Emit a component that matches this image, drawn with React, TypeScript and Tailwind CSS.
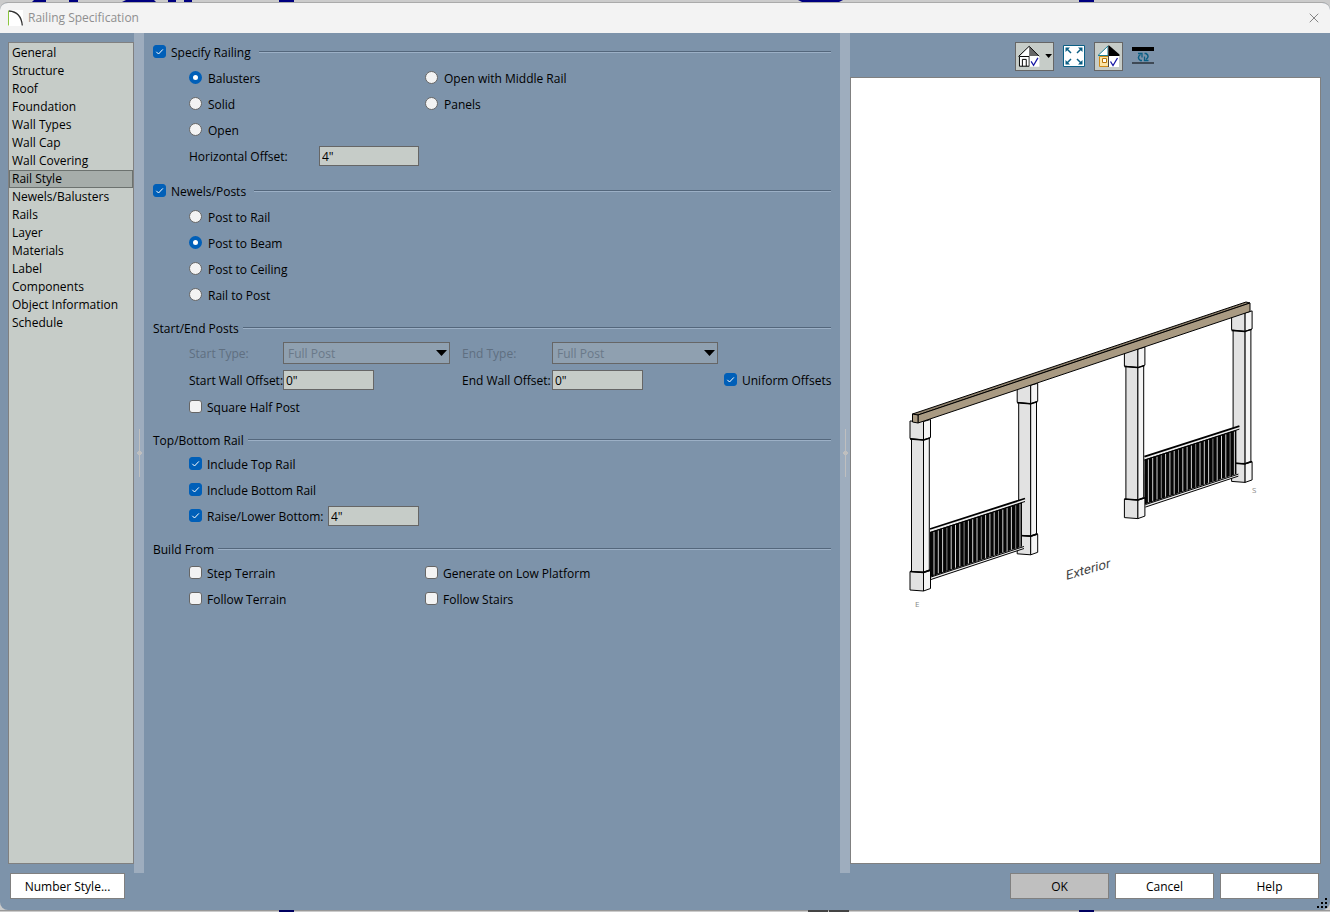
import { useState, type ReactNode } from "react";
import { X } from "lucide-react";

const pages = [
  "General",
  "Structure",
  "Roof",
  "Foundation",
  "Wall Types",
  "Wall Cap",
  "Wall Covering",
  "Rail Style",
  "Newels/Balusters",
  "Rails",
  "Layer",
  "Materials",
  "Label",
  "Components",
  "Object Information",
  "Schedule",
];

const FIELD = "h-5 border border-[#666] bg-[#c6ccc8] px-[2px] pt-px leading-4 outline-none";
const BUTTON = "h-[26px] border border-[#808080] pt-[2px] leading-[22px]";

function Check({ label, on = false }: { label: string; on?: boolean }) {
  const [checked, setChecked] = useState(on);
  return (
    <label className="flex h-[26px] items-center gap-[5px] whitespace-nowrap">
      <span className="relative mb-px block h-[13px] w-[13px] shrink-0">
        <input
          type="checkbox"
          checked={checked}
          onChange={() => setChecked((c) => !c)}
          className="block h-[13px] w-[13px] appearance-none rounded-[3px] border border-[#666] bg-[#f3f3f3] checked:border-[#005fb8] checked:bg-[#005fb8]"
        />
        {checked && (
          <svg viewBox="0 0 13 13" className="pointer-events-none absolute inset-0" fill="none" stroke="#fff">
            <path d="M3.3 6.8 5.5 9 9.9 4.4" />
          </svg>
        )}
      </span>
      <span className="pt-[2px]">{label}</span>
    </label>
  );
}

function Radio({ name, label, on = false }: { name: string; label: string; on?: boolean }) {
  return (
    <label className="flex h-[26px] items-center gap-[6px] whitespace-nowrap">
      <input
        type="radio"
        name={name}
        defaultChecked={on}
        className="mb-px h-[13px] w-[13px] shrink-0 appearance-none rounded-full border border-[#666] bg-[#f3f3f3] checked:border-4 checked:border-[#005fb8] checked:bg-white"
      />
      <span className="pt-[2px]">{label}</span>
    </label>
  );
}

function Rule() {
  return <div className="h-[2px] flex-1 border-t border-[#54677c] bg-[#9cb0c6]" />;
}

function CheckSection({ title, children }: { title: string; children: ReactNode }) {
  return (
    <section>
      <div className="flex items-center gap-2">
        <Check label={title} on />
        <Rule />
      </div>
      <div className="pl-9">{children}</div>
    </section>
  );
}

function Section({ title, children }: { title: string; children: ReactNode }) {
  return (
    <section>
      <div className="flex h-[22px] items-center gap-1">
        <h2 className="pt-[2px]">{title}</h2>
        <Rule />
      </div>
      <div className="pl-9">{children}</div>
    </section>
  );
}

function PostSelect({ id }: { id: string }) {
  return (
    <div className="relative h-[22px]">
      <select
        id={id}
        disabled
        className="h-full w-full appearance-none border border-[#666] bg-[#8fa0b0] px-1 pt-[2px] text-[#6a7989] opacity-100"
      >
        <option>Full Post</option>
      </select>
      <svg viewBox="0 0 11 6" className="pointer-events-none absolute right-[3px] top-2 h-[6px] w-[11px]">
        <path d="M0 0h11L5.5 6z" />
      </svg>
    </div>
  );
}

function Splitter() {
  return (
    <div className="flex w-[10px] shrink-0 items-center justify-center bg-[#9eadbe]">
      <svg viewBox="0 0 5 48" className="h-12 w-[5px]" fill="#bfbfbf">
        <path d="M2 0h1v48H2zM1 22h3v1h1v2H4v1H1v-1H0v-2h1z" />
      </svg>
    </div>
  );
}

function Post({ i }: { i: number }) {
  return (
    <g transform={`translate(${i * 107.2} ${i * -36.2})`} stroke="#000" strokeLinejoin="round">
      <path d="M911.5 438v134h12V438z" fill="#e2e2e2" />
      <path d="M923.5 438v134l5.8-2V438z" fill="#f4f4f4" />
      <path d="M910 421v17.500l13.500 1.500v-18.500z" fill="#e2e2e2" />
      <path d="M923.500 421.500v18.500l7-2.500v-18z" fill="#f4f4f4" />
      <path d="M910 571.500v18.500l13.500 1v-18.500z" fill="#e2e2e2" />
      <path d="M923.500 572.500v18.500l7-2.500v-18z" fill="#f4f4f4" />
      <path d="M910 439l13.500 1 6.500-2M910 571.500l13.500 1 7-2.500" fill="none" strokeWidth="1.500" />
    </g>
  );
}

function Panel({ i }: { i: number }) {
  const bars = Array.from({ length: 21 }, (_, n) => 934 + n * 4.3);
  return (
    <g transform={`translate(${i * 107.2} ${i * -36.2})`}>
      <path d="M930 531 1022 501.500v45L930 577z" fill="#050505" />
      {bars.map((x, n) => (
        <path
          key={x}
          d={`M${x} ${533 - (x - 930) * 0.323}v43`}
          stroke={n % 4 === 3 ? "#888" : "#d0d0d0"}
          strokeWidth="1"
        />
      ))}
      <path d="M930 529 1025 498.500v3L930 532z" fill="#eee" />
      <path d="M931 577 1024 546.500v2L931 579.500z" fill="#eee" />
      <path d="M930 529 1025 498.500" stroke="#000" strokeWidth="1.800" />
      <path d="M930 532.500 1025 501.500M931 577 1024 546.500M931 579.500 1024 548.500" stroke="#000" />
    </g>
  );
}

function RailingView() {
  return (
    <svg viewBox="851 78 469 785" className="h-full w-full" role="img" aria-label="Railing preview">
      <Post i={1} />
      <Post i={3} />
      <Panel i={0} />
      <Panel i={2} />
      <Post i={0} />
      <Post i={2} />
      <g stroke="#000" strokeLinejoin="round">
        <path d="M912.500 414 1246 302l4 1-332 112z" fill="#8f816c" />
        <path d="M918 415 1250 303v8.500L918 423z" fill="#a99a82" />
        <path d="M912.500 414l5.500 1v8l-5.500-1z" fill="#a99a82" />
      </g>
      <text
        transform="translate(1066 580) skewY(-16)"
        className="font-[Roboto,sans-serif] text-[13px]"
        fill="#444"
      >
        Exterior
      </text>
      <text x="915" y="607" className="text-[8px]" fill="#888">E</text>
      <text x="1252" y="493" className="text-[8px]" fill="#888">S</text>
    </svg>
  );
}

function Toolbar() {
  return (
    <div className="flex h-11 items-center justify-center gap-[9px] pr-[3px] pt-[2px]">
      <button aria-label="Camera view" className="flex h-[29px] w-[39px] items-center border border-[#666] bg-[#c6ccc8] pl-[2px]">
        <svg viewBox="0 0 36 24" className="h-6 w-9" fill="none">
          <path d="M1.500 12.500 11.500 2v10.500z" fill="#fff" />
          <path d="M11.500 2 22 12.500H11.500z" fill="#666" />
          <path d="M.5 12.500 11.500 2 22 12.500" stroke="#000" />
          <path d="M1.500 12.500h10v10h-10z" fill="#fff" stroke="#000" />
          <path d="M4.500 22.500v-7h4v7" stroke="#000" />
          <path d="M12 12h10v11H12z" fill="#fff" />
          <path d="m13.500 17.500 2.500 4 4.500-7.500" stroke="#1a1aa6" strokeWidth="1.300" />
          <path d="M28 10h7l-3.500 4z" fill="#000" />
        </svg>
      </button>
      <button aria-label="Fill window">
        <svg viewBox="0 0 22 22" className="h-[22px] w-[22px]" stroke="#0b5f85" fill="#0b5f85">
          <path d="M.5.5h21v21H.5z" fill="#fff" />
          <path d="M2.500 2.500h4.500l-4.500 4.500zM19.500 2.500H15l4.500 4.500zM2.500 19.500H7l-4.500-4.500zM19.500 19.500H15l4.500-4.500z" stroke="none" />
          <path d="m4 4 4 4M18 4l-4 4M4 18l4-4M18 18l-4-4" strokeWidth="1.500" />
        </svg>
      </button>
      <button aria-label="Show color" className="flex h-[29px] w-[29px] items-center justify-center border border-[#666] bg-[#c6ccc8]">
        <svg viewBox="0 0 24 24" className="h-6 w-6" fill="none">
          <path d="M2 11.500 12 2v9.500z" fill="#fff" stroke="#1c7f96" />
          <path d="M12.500 1v11H23.500v-1.500z" fill="#000" />
          <path d="M3.500 12.500H13v10H3.500z" fill="#fbe3a4" stroke="#cf8a17" />
          <path d="M6.500 14.500h4v4h-4z" fill="#fff" stroke="#b87408" />
          <path d="M12.500 2v21" stroke="#444" />
          <path d="M13 12h10v11H13z" fill="#fff" />
          <path d="m14.500 17.500 2.500 4 4.500-7.500" stroke="#1a1aa6" strokeWidth="1.300" />
        </svg>
      </button>
      <button aria-label="Refresh">
        <svg viewBox="0 0 22 22" className="h-[22px] w-[22px]" fill="none">
          <path d="M0 2h22v4H0zM0 17.500h22v1H0z" fill="#000" />
          <path d="M10 15.500H8.500C6 14 5.500 11.500 8.500 9.500" stroke="#0b5f85" strokeWidth="1.500" />
          <path d="M6 8.500h4v4" stroke="#0b5f85" strokeWidth="1.300" />
          <path d="M12.500 8.500H14c2.500 1.500 3 4 0 6" stroke="#0b5f85" strokeWidth="1.500" />
          <path d="M16.500 15.500h-4v-4" stroke="#0b5f85" strokeWidth="1.300" />
        </svg>
      </button>
    </div>
  );
}

function Backdrop({ children }: { children: ReactNode }) {
  return (
    <svg className="h-[2px] w-full" aria-hidden="true">
      {children}
    </svg>
  );
}

export default function App() {
  const [page, setPage] = useState("Rail Style");

  return (
    <div className="flex min-h-screen flex-col bg-[#cbcbcb] font-['Open_Sans','Noto_Sans',sans-serif] text-[12px] leading-[18px] text-black">
      <Backdrop>
        <path d="M34 0h12v2H32zM69 0h9v2h-9zM126 0h28l2 2h-34zM168 0h8v2h-8zM184 0h8v2h-8zM279 0h15v2h-15zM798 0h45l-4 2h-37zM1079 0h15v2h-15z" fill="#000080" />
      </Backdrop>
      <div className="flex flex-1 flex-col overflow-hidden rounded-lg border-t border-[#aaa] bg-[#7d93aa]">
        <header className="flex h-[30px] items-center bg-[#f3f3f3] pl-2 pr-2">
          <svg viewBox="0 0 15 16" className="h-4 w-[15px]" fill="none">
            <path d="M0 0h15v16H0z" fill="#fff" />
            <path d="M.5.500v15" stroke="#8cc63f" />
            <path d="M1 1c8 .5 12.500 6 13.300 14.500" stroke="#333" strokeWidth="1.300" />
          </svg>
          <h1 className="flex-1 pl-[5px] text-[#8f8f8f]">Railing Specification</h1>
          <button aria-label="Close">
            <X size={16} strokeWidth={1.5} color="#858585" />
          </button>
        </header>

        <div className="flex flex-1">
          <nav className="my-[9px] ml-2 w-[126px] shrink-0 border border-[#808080] bg-[#c6ccc8] pt-px">
            {pages.map((p) => (
              <button
                key={p}
                onClick={() => setPage(p)}
                className={
                  p === page
                    ? "block h-[18px] w-full whitespace-nowrap border border-[#6c726f] bg-[#a6adaa] px-[2px] text-left leading-4"
                    : "block h-[18px] w-full whitespace-nowrap px-[3px] text-left"
                }
              >
                {p}
              </button>
            ))}
          </nav>
          <Splitter />

          <main className="flex flex-1 flex-col gap-[9px] px-[9px] pt-[6px]">
            <CheckSection title="Specify Railing">
              <div className="grid grid-cols-[236px_1fr]">
                <Radio name="railing" label="Balusters" on />
                <Radio name="railing" label="Open with Middle Rail" />
                <Radio name="railing" label="Solid" />
                <Radio name="railing" label="Panels" />
                <Radio name="railing" label="Open" />
              </div>
              <div className="flex h-[26px] items-center">
                <label htmlFor="h-offset" className="w-[130px] pt-[2px]">Horizontal Offset:</label>
                <input id="h-offset" defaultValue={'4"'} className={`${FIELD} w-[100px]`} />
              </div>
            </CheckSection>

            <CheckSection title="Newels/Posts">
              <Radio name="newels" label="Post to Rail" />
              <Radio name="newels" label="Post to Beam" on />
              <Radio name="newels" label="Post to Ceiling" />
              <Radio name="newels" label="Rail to Post" />
            </CheckSection>

            <Section title="Start/End Posts">
              <div className="grid auto-rows-[26px] grid-cols-[94px_167px_90px_166px_1fr] items-center gap-y-px whitespace-nowrap pt-px">
                <label htmlFor="start-type" className="pt-[2px] text-[#5f6f81]">Start Type:</label>
                <PostSelect id="start-type" />
                <label htmlFor="end-type" className="pl-3 pt-[2px] text-[#5f6f81]">End Type:</label>
                <div className="-mr-3 ml-3">
                  <PostSelect id="end-type" />
                </div>
                <span />
                <label htmlFor="start-offset" className="pt-[2px]">Start Wall Offset:</label>
                <input id="start-offset" defaultValue={'0"'} className={`${FIELD} w-[91px]`} />
                <label htmlFor="end-offset" className="pl-3 pt-[2px]">End Wall Offset:</label>
                <input id="end-offset" defaultValue={'0"'} className={`${FIELD} ml-3 w-[91px]`} />
                <div className="pl-[18px]">
                  <Check label="Uniform Offsets" on />
                </div>
                <Check label="Square Half Post" />
              </div>
            </Section>

            <Section title="Top/Bottom Rail">
              <Check label="Include Top Rail" on />
              <Check label="Include Bottom Rail" on />
              <div className="flex items-center">
                <div className="w-[139px]">
                  <Check label="Raise/Lower Bottom:" on />
                </div>
                <input aria-label="Raise/Lower Bottom" defaultValue={'4"'} className={`${FIELD} w-[91px]`} />
              </div>
            </Section>

            <Section title="Build From">
              <div className="grid grid-cols-[236px_1fr]">
                <Check label="Step Terrain" />
                <Check label="Generate on Low Platform" />
                <Check label="Follow Terrain" />
                <Check label="Follow Stairs" />
              </div>
            </Section>
          </main>
          <Splitter />

          <aside className="flex w-[480px] shrink-0 flex-col pb-[9px] pr-[9px]">
            <Toolbar />
            <div className="flex-1 border border-[#808080] bg-white">
              <RailingView />
            </div>
          </aside>
        </div>

        <footer className="flex gap-[6px] pb-[11px] pl-[10px] pr-[11px]">
          <button className={`${BUTTON} w-[115px] bg-white`}>Number Style...</button>
          <div className="flex-1" />
          <button className={`${BUTTON} w-[99px] bg-[#bfbfbf]`}>OK</button>
          <button className={`${BUTTON} w-[99px] bg-white`}>Cancel</button>
          <button className={`${BUTTON} relative w-[99px] bg-white`}>
            Help
            <svg viewBox="0 0 12 12" className="absolute -bottom-[11px] -right-[11px] h-3 w-3">
              <path d="M8 1h2v2H8zM8 5h2v2H8zM4 5h2v2H4zM8 9h2v2H8zM4 9h2v2H4zM0 9h2v2H0z" />
            </svg>
          </button>
        </footer>
      </div>
      <Backdrop>
        <path d="M0 0h1330v1H0z" fill="#999" />
        <path d="M279 0h15v2h-15zM1079 0h15v2h-15z" fill="#000060" />
        <path d="M808 0h20v2h-20zM829 0h20v2h-20z" fill="#444" />
      </Backdrop>
    </div>
  );
}
